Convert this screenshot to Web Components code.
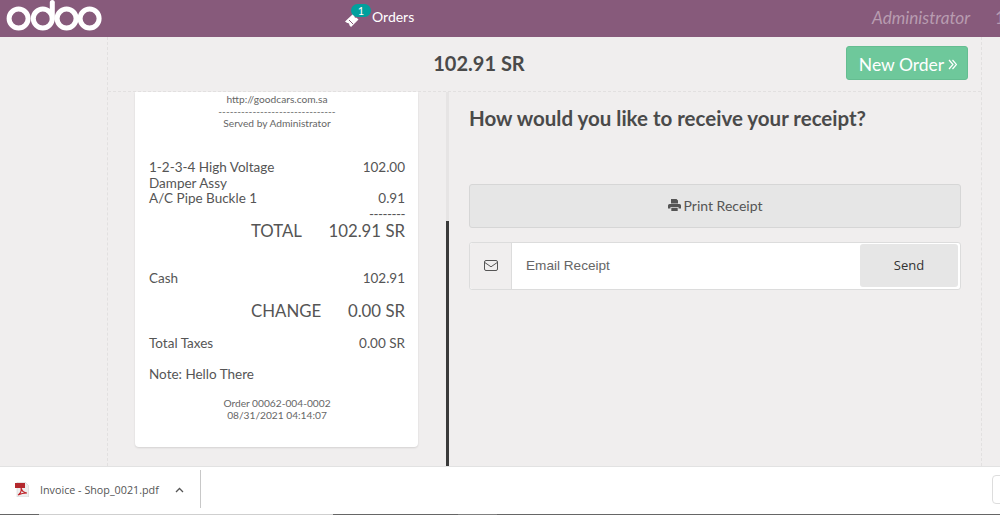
<!DOCTYPE html>
<html>
<head>
<meta charset="utf-8">
<title>Odoo POS receipt</title>
<style>
  html, body { margin: 0; height: 100%; }
  body {
    width: 1000px;
    height: 515px;
    overflow: hidden;
    display: flex;
    flex-direction: column;
    font-family: Lato, "Liberation Sans", sans-serif;
    color: #4a4a4a;
    background: #f0eeee;
  }
</style>
</head>
<body>
  <pos-navbar></pos-navbar>
  <pos-screen>
    <pos-topbar slot="top" amount="102.91 SR"></pos-topbar>
    <pos-receipt slot="left">
      <receipt-line>1-2-3-4 High Voltage<span slot="value">102.00</span></receipt-line>
      <receipt-line>Damper Assy</receipt-line>
      <receipt-line>A/C Pipe Buckle 1<span slot="value">0.91</span></receipt-line>
    </pos-receipt>
    <pos-send-panel slot="right"></pos-send-panel>
  </pos-screen>
  <download-bar file="Invoice - Shop_0021.pdf"></download-bar>

<script>
class PosNavbar extends HTMLElement {
  constructor() {
    super();
    this.attachShadow({ mode: "open" });
  }
  connectedCallback() {
    this.shadowRoot.innerHTML = `
      <style>
        :host { display: flex; align-items: center; height: 37px; background: #875a7b; color: #fff; flex: none; overflow: hidden; }
        .logo { margin-left: 6px; width: 96px; height: 37px; flex: none; }
        .orders { margin-left: 243px; display: flex; align-items: center; position: relative; font-size: 14px; width: 72px; flex: none; margin-top: -5px; }
        .orders svg { width: 16px; height: 14px; margin: 7px 11px 0 0; flex: none; }
        .badge { position: absolute; left: 6px; top: -2px; width: 20px; height: 13px; border-radius: 7px; background: #00a09d; font-size: 11px; line-height: 13px; text-align: center; }
        .user { margin-left: 455px; margin-top: -3px; font-size: 17.200px; font-style: italic; color: #b89cb0; width: 97px; white-space: nowrap; flex: none; }
        .num { margin-left: 26px; font-size: 17.200px; color: #b89cb0; flex: none; margin-top: -3px; }
      </style>
      <svg class="logo" viewBox="0 0 96 37">
        <g fill="none" stroke="#fff" stroke-width="5">
          <circle cx="12.6" cy="18.6" r="9.5"></circle>
          <circle cx="36.8" cy="18.6" r="9.5"></circle>
          <path d="M46.3 18.6V2.500" stroke-linecap="round"></path>
          <circle cx="60.6" cy="18.6" r="9.5"></circle>
          <circle cx="83.6" cy="18.6" r="9.5"></circle>
        </g>
      </svg>
      <div class="orders">
        <svg viewBox="0 0 16 14"><path fill="#fff" d="M0 8.5 8 1l1.6 1.7a1.5 1.5 0 0 0 2 2L13.500 6.500 6 14l-1.800-1.900a1.500 1.500 0 0 0-2-2z"></path><path stroke="#875a7b" fill="none" d="M4 7l4 4"></path></svg>
        <span>Orders</span>
        <span class="badge">1</span>
      </div>
      <div class="user">Administrator</div>
      <div class="num">1</div>
    `;
  }
}

class PosScreen extends HTMLElement {
  constructor() {
    super();
    this.attachShadow({ mode: "open" });
    this.shadowRoot.innerHTML = `
      <style>
        :host { display: block; flex: 1; min-height: 0; }
        .screen { margin-left: 107px; width: 873px; height: 100%; box-sizing: content-box; display: flex; flex-direction: column;
          border-left: 1px dashed #e2e0e0; border-right: 1px dashed #e2e0e0; }
        .body { flex: 1; min-height: 0; display: flex; }
        .left { width: 337px; flex: none; min-height: 0; overflow: hidden; }
        .scroll { width: 3px; flex: none; background: #e6e4e4; margin-left: 1px; position: relative; display: flex; flex-direction: column; }
        .scroll i { display: block; margin-top: 129px; flex: 1; background: #3a3a3a; }
        .right { flex: 1; min-width: 0; }
      </style>
      <div class="screen">
        <slot name="top"></slot>
        <div class="body">
          <div class="left"><slot name="left"></slot></div>
          <div class="scroll"><i></i></div>
          <div class="right"><slot name="right"></slot></div>
        </div>
      </div>
    `;
  }
}

class PosTopbar extends HTMLElement {
  constructor() {
    super();
    this.attachShadow({ mode: "open" });
  }
  connectedCallback() {
    this.shadowRoot.innerHTML = `
      <style>
        :host { display: flex; align-items: center; height: 55px; box-sizing: border-box; border-bottom: 1px dashed #e2e0e0; }
        .amount { flex: 1; text-align: center; font-size: 20px; font-weight: 700; color: #4a4a4a; margin: -2px 0 0 4px; }
        button { width: 122px; height: 34px; margin: -2px 13px 0 0; padding: 2px 0 0 2px; border: 1px solid #65bd91; border-radius: 3px; background: #6ec89b;
          color: #fff; font: 17.500px Lato, sans-serif; flex: none; display: flex; align-items: center; justify-content: center; gap: 4px; }
        button svg { width: 9px; height: 11px; margin-top: 1px; }
      </style>
      <div class="amount">${this.getAttribute("amount")}</div>
      <button>New Order<svg viewBox="0 0 9 11"><path d="M1 1l4 4.500-4 4.500M4.500 1l4 4.500-4 4.500" fill="none" stroke="#fff" stroke-width="1.200"></path></svg></button>
    `;
  }
}

class ReceiptLine extends HTMLElement {
  constructor() {
    super();
    this.attachShadow({ mode: "open" }).innerHTML = `
      <style>
        :host { display: flex; justify-content: space-between; line-height: 15.500px; font-size: 13.500px; color: #555; }
        :host([big]) { font-size: 16.800px; line-height: 24px; padding-left: 102px; }
      </style>
      <span class="label"><slot></slot></span>
      <span class="value"><slot name="value"></slot></span>
    `;
  }
}

class PosReceipt extends HTMLElement {
  constructor() {
    super();
    this.attachShadow({ mode: "open" }).innerHTML = `
      <style>
        :host { display: block; width: 283px; height: 355px; margin-left: 27px; box-sizing: border-box; padding: 0 13px 0 14px;
          background: #fff; border-radius: 0 0 4px 4px; box-shadow: 0 1px 2px rgba(0,0,0,.12); overflow: hidden; }
        .small { text-align: center; font-size: 10.200px; line-height: 12px; color: #666; }
        .head { margin-top: 1px; height: 67px; }
        .dash { text-align: right; font-size: 13.500px; line-height: 15px; color: #555; letter-spacing: -0.500px; }
        .big { margin-top: -3px; }
        .gap1 { margin-top: 28px; }
        .gap2 { margin-top: 13px; }
        .gap3 { margin-top: 13px; }
        .gap4 { margin-top: 15px; }
        .foot { margin-top: 15px; }
      </style>
      <div class="small head">
        http://goodcars.com.sa<br>
        -------------------------------<br>
        <div>Served by Administrator</div>
      </div>
      <slot></slot>
      <div class="dash">--------</div>
      <receipt-line big class="big">TOTAL<span slot="value">102.91 SR</span></receipt-line>
      <receipt-line class="gap1">Cash<span slot="value">102.91</span></receipt-line>
      <receipt-line big class="gap2">CHANGE<span slot="value">0.00 SR</span></receipt-line>
      <receipt-line class="gap3">Total Taxes<span slot="value">0.00 SR</span></receipt-line>
      <receipt-line class="gap4">Note: Hello There</receipt-line>
      <div class="small foot">Order 00062-004-0002<br>08/31/2021 04:14:07</div>
    `;
  }
}

class PosSendPanel extends HTMLElement {
  constructor() {
    super();
    this.attachShadow({ mode: "open" }).innerHTML = `
      <style>
        :host { display: block; padding: 13px 20px 0 20px; }
        h2 { margin: 0; font-size: 20.500px; line-height: 26px; font-weight: 700; color: #4a4a4a; height: 79px; }
        .print { height: 44px; box-sizing: border-box; padding-bottom: 2px; border: 1px solid #d6d6d6; border-radius: 3px; background: #e6e6e6;
          display: flex; align-items: center; justify-content: center; gap: 3px; font-size: 14px; color: #555; }
        .print svg { width: 13px; height: 12px; }
        .email { margin-top: 14px; height: 48px; box-sizing: border-box; border: 1px solid #dcdcdc; border-radius: 3px; background: #fff; display: flex; align-items: stretch; }
        .icon { width: 41px; flex: none; background: #f0eeee; border-right: 1px solid #dcdcdc; display: flex; align-items: center; justify-content: center; border-radius: 3px 0 0 3px; }
        .icon svg { width: 14px; height: 11px; margin-top: -2px; }
        .label { flex: 1; padding-left: 14px; font: 13.600px/45px "Liberation Sans", Arial, sans-serif; color: #666; }
        button { width: 98px; height: 43px; margin: 1px 2px 0 0; padding: 0 0 2px 0; border: none; border-radius: 3px; background: #e6e6e6; color: #333; font: 13px "Open Sans", sans-serif; flex: none; }
      </style>
      <h2>How would you like to receive your receipt?</h2>
      <div class="print">
        <svg viewBox="0 0 13 12"><path fill="#555" d="M3 0h5.500L10 1.500V4.500H3zM1.500 5h10A1.500 1.500 0 0 1 13 6.500V9.500h-2.500V8h-8V9.500H0V6.500A1.500 1.500 0 0 1 1.500 5zM3.300 8.800h6.400V12H3.300z"></path></svg>
        <span>Print Receipt</span>
      </div>
      <div class="email">
        <div class="icon">
          <svg viewBox="0 0 14 11"><rect x=".5" y=".5" width="13" height="10" rx="1.500" fill="none" stroke="#555"></rect><path d="M.8 2.500 7 6.800l6.200-4.300" fill="none" stroke="#555"></path></svg>
        </div>
        <div class="label">Email Receipt</div>
        <button>Send</button>
      </div>
    `;
  }
}

class DownloadBar extends HTMLElement {
  constructor() {
    super();
    this.attachShadow({ mode: "open" });
  }
  connectedCallback() {
    this.shadowRoot.innerHTML = `
      <style>
        :host { display: flex; align-items: center; height: 49px; box-sizing: border-box; border-top: 1px solid #e2e2e2; padding-bottom: 1px; flex: none; overflow: hidden;
          background: #fff linear-gradient(to right, #666 39px, #cfcfcf 39px, #cfcfcf 333px, #666 333px, #666 458px, #808080 458px, #808080 497px, #666 497px) no-repeat left bottom / 100% 1px; }
        .pdf { width: 14px; height: 15px; margin: -3px 0 0 15px; flex: none; }
        .name { margin: -1px 0 0 11px; width: 118px; font: 10.750px "Open Sans", sans-serif; color: #555; white-space: nowrap; flex: none; }
        .chev { width: 9px; height: 6px; margin: -2px 0 0 17px; flex: none; }
        .sep { width: 1px; height: 38px; margin: -3px 0 0 16px; background: #c8c8c8; flex: none; }
        .box { margin: -3px -10px 0 auto; width: 16px; height: 27px; border: 1px solid #ddd; border-radius: 4px; flex: none; }
      </style>
      <svg class="pdf" viewBox="0 0 14 15">
        <path fill="#eee" stroke="#ccc" stroke-width=".5" d="M2 0h8l3.500 3.500V15H2z"></path>
        <rect x="0" y="1" width="10" height="5" fill="#b3282d"></rect>
        <path fill="none" stroke="#c0272d" stroke-width="1.200" d="M6 6c1 3-1 6-3 7 2-1 5-2 9-2-3 0-5-2-6-5z"></path>
      </svg>
      <span class="name">${this.getAttribute("file")}</span>
      <svg class="chev" viewBox="0 0 9 6"><path d="M1 5l3.500-3.500L8 5" fill="none" stroke="#555" stroke-width="1.300"></path></svg>
      <div class="sep"></div>
      <div class="box"></div>
    `;
  }
}

customElements.define("pos-navbar", PosNavbar);
customElements.define("pos-screen", PosScreen);
customElements.define("pos-topbar", PosTopbar);
customElements.define("receipt-line", ReceiptLine);
customElements.define("pos-receipt", PosReceipt);
customElements.define("pos-send-panel", PosSendPanel);
customElements.define("download-bar", DownloadBar);
</script>
</body>
</html>
